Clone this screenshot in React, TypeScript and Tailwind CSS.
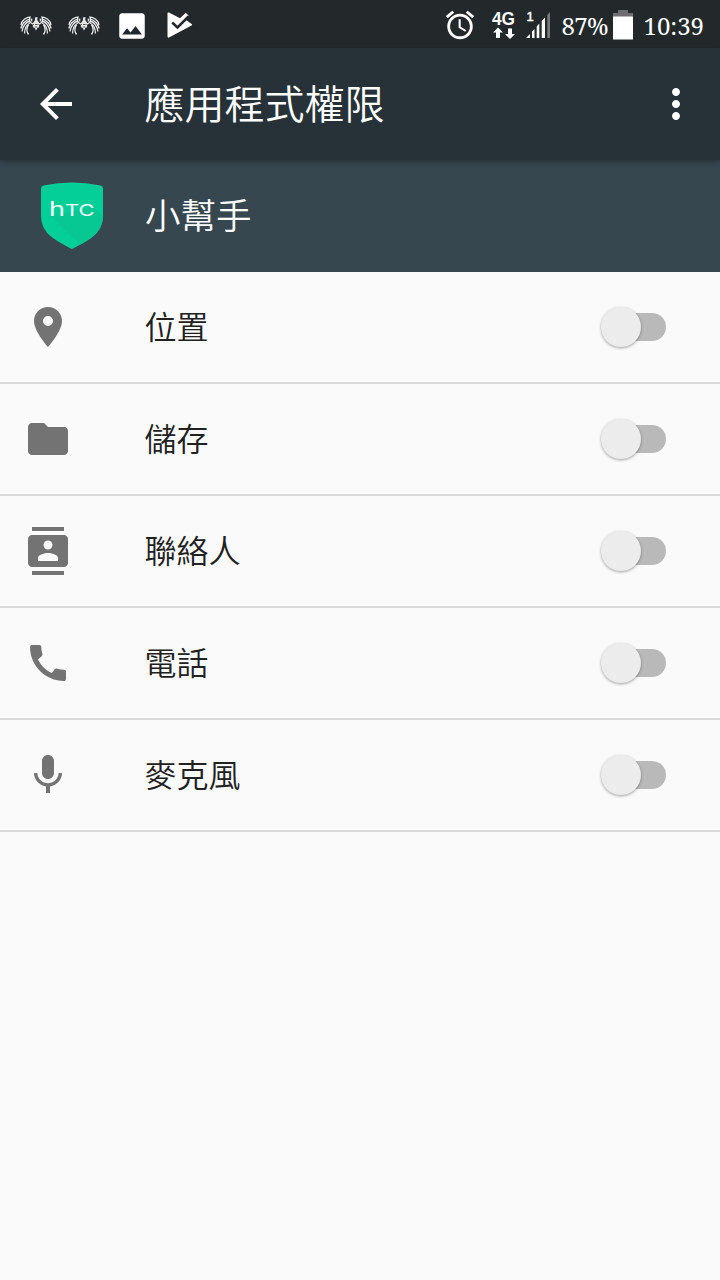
import { useState } from "react";
import type { IconType } from "react-icons";
import { MdAlarm, MdArrowBack, MdCall, MdContacts, MdFolder, MdImage, MdMic, MdMoreVert, MdPlace } from "react-icons/md";

type Permission = { id: string; label: string; icon: IconType };

const permissions: Permission[] = [
  { id: "location", label: "位置", icon: MdPlace },
  { id: "storage", label: "儲存", icon: MdFolder },
  { id: "contacts", label: "聯絡人", icon: MdContacts },
  { id: "phone", label: "電話", icon: MdCall },
  { id: "mic", label: "麥克風", icon: MdMic },
];

// One wing plus half of the body, mirrored to form the emblem
function WingHalf() {
  return (
    <g fill="none" stroke="#e6e8e8">
      <path d="M10.800 .8C6 1 1.500 4.500 1 9" strokeWidth="1.300" />
      <path d="M10.500 2.800C6 4 2.500 6 .8 12.500" strokeWidth="1.300" />
      <path d="M10.500 5C6.500 5.500 3.300 8.500 2 15.500" strokeWidth="1.300" />
      <path d="M10 7C7 8 4.800 11 4.500 17.500" strokeWidth="1.300" />
      <path d="M8.500 8.500C6.500 11.500 6.500 15.500 8.500 18.500" strokeWidth="1.400" />
      <path d="M9.500 1V6.500M10 6L12.500 8L14.500 6.500M11.700 5.500V2.500M13.500 9V11.500" strokeWidth="1.200" />
    </g>
  );
}

function PhoenixIcon() {
  return (
    <svg className="h-5 w-8" viewBox="0 0 32 20">
      <WingHalf />
      <g transform="translate(32 0) scale(-1 1)">
        <WingHalf />
      </g>
      <path d="M14.800 1.500L17.500 1L17.200 4L19 6.500L18 11L16 14.500L14 11L13.500 6.500L15 4Z" fill="#e6e8e8" />
      <path d="M15 8.500H17.500M15.200 11H17" stroke="#23282b" strokeWidth="0.8" />
    </svg>
  );
}

function PlayCheckIcon() {
  return (
    <svg className="h-7 w-7" viewBox="0 0 28 28">
      <path d="M1.500 .8Q2 .2 3 .6L14 6.200L19.800 .8L22.500 3.500L20 8L26 12.300Q26.500 13 25.500 13.600L3 25.500Q1.500 26 1.500 24.500Z" fill="#fff" />
      <path d="M6.200 10.500L11.500 15.500L22.500 4.500" fill="none" stroke="#23282b" strokeWidth="2.500" />
    </svg>
  );
}

function NetworkIcon() {
  return (
    <svg className="h-7 w-6 overflow-visible" viewBox="0 0 24 28" fill="#fff">
      <text x="0" y="14" fontSize="18.500" fontWeight="700" textLength="23" lengthAdjust="spacingAndGlyphs" fontFamily="Liberation Sans, sans-serif">
        4G
      </text>
      <path d="M6 16.500L11 21.500H8V27H4V21.500H1Z" />
      <path d="M18 28L13 23H16V17.500H20V23H23Z" />
    </svg>
  );
}

function SignalIcon() {
  return (
    <svg className="h-7 w-6 overflow-visible" viewBox="0 0 24 28" fill="#fff">
      <text x="0.500" y="9.500" fontSize="13" fontWeight="400" stroke="#fff" strokeWidth="0.5" fontFamily="Liberation Sans, sans-serif">
        1
      </text>
      <path d="M0 27L4 23V27ZM6 20.500L8.500 18V27H6ZM10.700 15.500L13.300 12.500V27H10.700ZM15.700 10L19 6.500V27H15.700Z" />
      <path d="M21.300 4L24 1V27H21.300Z" fill="#777b7d" />
    </svg>
  );
}

function BatteryIcon() {
  return (
    <svg className="h-[30px] w-5" viewBox="0 0 20 30">
      <path d="M5 0H15V3H20V8H0V3H5Z" fill="#6b6f71" />
      <path d="M0 6.500H20V29.500H0Z" fill="#fff" />
    </svg>
  );
}

function StatusBar() {
  return (
    <div className="flex h-12 items-center justify-between bg-[#23282b] pr-4 pl-5 text-white">
      <div className="flex items-center pt-1">
        <PhoenixIcon />
        <div className="ml-4">
          <PhoenixIcon />
        </div>
        <MdImage className="ml-[15px] size-[34px]" />
        <div className="ml-[17px]">
          <PlayCheckIcon />
        </div>
      </div>
      <div className="flex items-center pt-0.5">
        <MdAlarm className="mr-[15px] size-[34px]" />
        <NetworkIcon />
        <div className="ml-2.5">
          <SignalIcon />
        </div>
        <span className="ml-[11px] w-[46px] pt-0.5 font-['Noto_Serif','Liberation_Serif',serif] text-[24px] leading-none tracking-[-0.7px]">87%</span>
        <div className="ml-1.5">
          <BatteryIcon />
        </div>
        <span className="ml-2.5 pt-0.5 font-['Noto_Serif','Liberation_Serif',serif] text-[24px] leading-none">10:39</span>
      </div>
    </div>
  );
}

function ShieldLogo() {
  return (
    <svg className="h-[70px] w-16" viewBox="0 0 64 70">
      <defs>
        <clipPath id="shield">
          <path d="M1 7.500Q1 5 3.500 4.500Q18 1.500 32 1.500Q46 1.500 60.500 4.500Q63 5 63 7.500V34C63 51 52 58 32 68C12 58 1 51 1 34Z" />
        </clipPath>
      </defs>
      <g clipPath="url(#shield)">
        <path d="M0 0H64V70H0Z" fill="#05cf98" />
        <path d="M11 35L43 67L64 60V36L53 26Z" fill="#07c793" />
      </g>
      <g fill="#fff" fontFamily="Inter, sans-serif" fontWeight="400">
        <text x="9" y="35" fontSize="19.500" textLength="16" lengthAdjust="spacingAndGlyphs">h</text>
        <text x="25" y="35" fontSize="16" textLength="29.500" lengthAdjust="spacingAndGlyphs">TC</text>
      </g>
    </svg>
  );
}

function Toggle({ on, onChange }: { on: boolean; onChange: () => void }) {
  return (
    <button
      role="switch"
      aria-checked={on}
      onClick={onChange}
      className={`flex h-7 w-[60px] items-center rounded-full ${on ? "justify-end bg-[#80cbc4]" : "justify-start bg-[#b9b9b9]"}`}
    >
      <span className="-ml-[5px] size-10 shrink-0 rounded-full bg-[#ececec] shadow-[0_1px_3px_rgba(0,0,0,0.35)]" />
    </button>
  );
}

export default function App() {
  const [granted, setGranted] = useState<Record<string, boolean>>({});

  return (
    <div className="flex min-h-screen w-[720px] flex-col bg-[#fafafa] font-['Noto_Sans_CJK_TC',sans-serif]">
      <StatusBar />
      <header className="z-10 flex h-28 items-center bg-[#263238] pr-5 pl-8 text-white shadow-[0_2px_6px_rgba(0,0,0,0.3)]">
        <MdArrowBack className="size-12" />
        <h1 className="ml-[64.5px] flex-1 pb-1 text-[40px] leading-none font-[350]">應用程式權限</h1>
        <MdMoreVert className="size-12" />
      </header>
      <section className="flex h-28 items-center bg-[#37474f] pl-10 text-white">
        <ShieldLogo />
        <h2 className="ml-[41px] pb-1 text-[35.5px] leading-none font-[350]">小幫手</h2>
      </section>
      <ul>
        {permissions.map(({ id, label, icon: Icon }) => (
          <li key={id} className="flex h-28 items-center border-b-2 border-[#dadada] pr-[54px] pl-6 text-[#212121]">
            <Icon className="size-12 text-[#737373]" />
            <span className="ml-[72.5px] flex-1 pb-1 text-[32px] leading-none font-[350]">{label}</span>
            <Toggle on={!!granted[id]} onChange={() => setGranted({ ...granted, [id]: !granted[id] })} />
          </li>
        ))}
      </ul>
    </div>
  );
}
